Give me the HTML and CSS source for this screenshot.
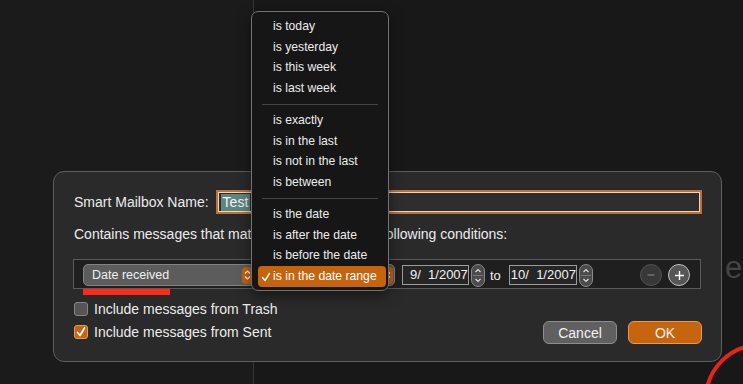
FILE: index.html
```html
<!DOCTYPE html>
<html lang="en">

<head>
    <meta charset="UTF-8">
    <meta name="viewport" content="width=device-width, initial-scale=1.0">
    <title>Smart Mailbox</title>
    <link rel="stylesheet" href="styles.css">
</head>

<body>
    <div class="desk">
        <div class="pane pane-left"></div>
        <div class="pane pane-right">
            <div class="ghost">es</div>
        </div>
    </div>

    <div class="sheet">
        <div class="name-row">
            <label>Smart Mailbox Name:</label>
            <div class="field"><span class="sel">Test</span></div>
        </div>
        <div class="intro">Contains messages that match <span class="mini-popup">all</span> of the following conditions:</div>
        <div class="criteria">
            <div class="popup popup-field">
                <span>Date received</span>
                <span class="arrows">
                    <svg width="7" height="12" viewBox="0 0 7 12"><path d="M1 4.5 3.5 2 6 4.5M1 7.5 3.5 10 6 7.5" fill="none" stroke="#fff" stroke-width="1.2"/></svg>
                </span>
            </div>
            <div class="popup popup-op">
                <span>is in the date range</span>
                <span class="arrows">
                    <svg width="7" height="12" viewBox="0 0 7 12"><path d="M1 4.5 3.5 2 6 4.5M1 7.5 3.5 10 6 7.5" fill="none" stroke="#fff" stroke-width="1.2"/></svg>
                </span>
            </div>
            <div class="date date-from">9/  1/2007</div>
            <div class="stepper">
                <svg width="14" height="23" viewBox="0 0 14 23"><path d="M4.5 8 7 5.5 9.5 8M4.5 15 7 17.5 9.5 15" fill="none" stroke="#ddd" stroke-width="1.2"/><path d="M2 11.5h10" stroke="#777" stroke-width="1"/></svg>
            </div>
            <span class="to">to</span>
            <div class="date date-to">10/  1/2007</div>
            <div class="stepper">
                <svg width="14" height="23" viewBox="0 0 14 23"><path d="M4.5 8 7 5.5 9.5 8M4.5 15 7 17.5 9.5 15" fill="none" stroke="#ddd" stroke-width="1.2"/><path d="M2 11.5h10" stroke="#777" stroke-width="1"/></svg>
            </div>
            <button class="round round-minus">
                <svg width="10" height="10" viewBox="0 0 10 10"><path d="M1.5 5h7" stroke="#7a7a7a" stroke-width="1.3"/></svg>
            </button>
            <button class="round round-plus">
                <svg width="11" height="11" viewBox="0 0 11 11"><path d="M1 5.5h9M5.5 1v9" stroke="#fff" stroke-width="1.4"/></svg>
            </button>
        </div>
        <div class="flag"></div>
        <div class="options">
            <div class="checks">
                <div class="check">
                    <span class="box"></span>
                    <span>Include messages from Trash</span>
                </div>
                <div class="check">
                    <span class="box box-on">
                        <svg width="12" height="12" viewBox="0 0 12 12"><path d="M2.5 6.5 5 9.5 9.5 2" fill="none" stroke="#fff" stroke-width="1.8" stroke-linecap="round" stroke-linejoin="round"/></svg>
                    </span>
                    <span>Include messages from Sent</span>
                </div>
            </div>
            <div class="buttons">
                <button class="btn btn-cancel">Cancel</button>
                <button class="btn btn-ok">OK</button>
            </div>
        </div>
    </div>

    <ul class="menu">
        <li>is today</li>
        <li>is yesterday</li>
        <li>is this week</li>
        <li>is last week</li>
        <li class="sep"></li>
        <li>is exactly</li>
        <li>is in the last</li>
        <li>is not in the last</li>
        <li>is between</li>
        <li class="sep"></li>
        <li>is the date</li>
        <li>is after the date</li>
        <li>is before the date</li>
        <li class="picked">
            <svg class="tick" width="10" height="10" viewBox="0 0 10 10"><path d="M1.5 5.5 4 8.5 8.5 1.5" fill="none" stroke="#fff" stroke-width="1.4" stroke-linecap="round" stroke-linejoin="round"/></svg>
            is in the date range
        </li>
    </ul>

    <div class="mark"></div>
</body>

</html>
```

FILE: styles.css
```css
* {
    box-sizing: border-box;
}

body {
    margin: 0;
    width: 743px;
    height: 384px;
    overflow: hidden;
    position: relative;
    background: #1a1a1a;
    font-family: "Liberation Sans", Arial, sans-serif;
    color: #e6e6e6;
}

.desk {
    display: flex;
    height: 384px;
}

.pane-left {
    width: 254px;
    background: #1b1b1b;
    border-right: 1px solid #363636;
}

.pane-right {
    flex: 1;
    background: #181818;
    padding: 251px 0 0 471px;
    overflow: hidden;
}

.ghost {
    font-size: 31px;
    line-height: 34px;
    color: #444444;
    white-space: nowrap;
}

/* sheet */

.sheet {
    position: absolute;
    left: 53px;
    top: 171px;
    width: 669px;
    height: 191px;
    background: #2a2a2a;
    border: 1px solid #5e5e5e;
    border-radius: 11px;
    padding: 18px 19px 0 20px;
    display: flex;
    flex-direction: column;
    font-size: 14px;
    color: #ececec;
}

.name-row {
    display: flex;
    align-items: center;
    height: 24px;
}

.name-row label {
    white-space: nowrap;
}

.field {
    flex: 1;
    height: 20px;
    margin: 0 2px 0 9px;
    padding-left: 2px;
    display: flex;
    align-items: center;
    background: #2e2e2e;
    border: 1px solid #f1d4ba;
    box-shadow: 0 0 0 2px #bb723c;
}

.sel {
    background: #5d8681;
    color: #f4f4f4;
    line-height: 17px;
    padding: 0 2px;
}

.intro {
    margin-top: 12px;
    line-height: 17px;
    white-space: nowrap;
}

.mini-popup {
    display: inline-block;
    width: 65px;
    margin: 0 2px;
    padding-left: 6px;
    line-height: 17px;
    font-size: 12px;
    background: #5c5c5c;
    border-radius: 4px;
}

.criteria {
    margin: 15px 0 0 -1px;
    width: 628px;
    height: 30px;
    padding: 3px 10px 1px 9px;
    display: flex;
    align-items: center;
    background: #1f1f1f;
    border: 1px solid #5a5a5a;
    font-size: 13px;
}

.popup {
    height: 22px;
    display: flex;
    align-items: center;
    justify-content: space-between;
    padding: 0 1px 0 8px;
    background: #5c5c5c;
    border: 1px solid #838383;
    border-radius: 5px;
    font-size: 12.5px;
    color: #f0f0f0;
    white-space: nowrap;
}

.popup-field {
    width: 172px;
}

.popup-op {
    width: 133px;
    margin-left: 7px;
}

.arrows {
    width: 11px;
    height: 17px;
    border-radius: 4px;
    background: #c6650f;
    display: flex;
    align-items: center;
    justify-content: center;
}

.date {
    height: 20px;
    line-height: 18px;
    padding-left: 7px;
    border: 1px solid #9c9c9c;
    background: #262626;
    white-space: pre;
    color: #f2f2f2;
}

.date-from {
    width: 67px;
    margin-left: 7px;
}

.date-to {
    width: 68px;
    margin-left: 8px;
    padding-left: 1px;
}

.stepper {
    width: 14px;
    height: 23px;
    margin-left: 2px;
    border-radius: 7px;
    background: #4b4b4b;
    border: 1px solid #8a8a8a;
    display: flex;
}

.stepper svg {
    margin: -1px;
}

.to {
    margin-left: 5px;
    color: #eeeeee;
}

.round {
    width: 22px;
    height: 22px;
    padding: 0;
    border-radius: 50%;
    display: flex;
    align-items: center;
    justify-content: center;
}

.round-minus {
    margin-left: auto;
    background: #383838;
    border: 1px solid #525252;
}

.round-plus {
    margin-left: 6px;
    background: #565656;
    border: 1.5px solid #c4c4c4;
}

.flag {
    margin-left: 9px;
    width: 87px;
    height: 6px;
    background: #ff2a18;
}

.options {
    margin-top: 5px;
    display: flex;
    justify-content: space-between;
    align-items: flex-end;
}

.checks {
    display: flex;
    flex-direction: column;
    gap: 5px;
    padding-bottom: 3px;
}

.check {
    height: 18px;
    display: flex;
    align-items: center;
    gap: 6px;
}

.box {
    width: 14px;
    height: 14px;
    border-radius: 3px;
    background: #555555;
    border: 1px solid #858585;
    display: flex;
    align-items: center;
    justify-content: center;
}

.box-on {
    background: #c8650f;
    border-color: #e49a5c;
}

.buttons {
    display: flex;
    gap: 11px;
}

.btn {
    width: 74px;
    height: 23px;
    padding: 0;
    border-radius: 6px;
    font-family: inherit;
    font-size: 14px;
    color: #f2f2f2;
}

.btn-cancel {
    background: #606060;
    border: 1px solid #8e8e8e;
}

.btn-ok {
    background: #c7650e;
    border: 1px solid #e6995a;
}

/* dropdown menu */

.menu {
    position: absolute;
    left: 251px;
    top: 11px;
    width: 138px;
    height: 280px;
    margin: 0;
    padding: 4px 0 0;
    list-style: none;
    background: #161616;
    border: 1px solid #727272;
    border-radius: 7px;
    box-shadow: 0 4px 14px rgba(0, 0, 0, 0.5);
    font-size: 12.2px;
    color: #ececec;
}

.menu li {
    height: 20.67px;
    line-height: 20.67px;
    padding-left: 21px;
    white-space: nowrap;
}

.menu li.sep {
    height: 1px;
    margin: 5px 10px 5.33px;
    padding: 0;
    background: #454545;
}

.menu li.picked {
    margin: 0 2px 0 6px;
    padding-left: 15px;
    position: relative;
    background: #c6640d;
    border-radius: 4px;
    color: #ffffff;
}

.tick {
    position: absolute;
    left: 3px;
    top: 6px;
}

/* annotation */

.mark {
    position: absolute;
    left: 704px;
    top: 343px;
    width: 112px;
    height: 112px;
    border: 4px solid #e6241c;
    border-radius: 50%;
}
```
